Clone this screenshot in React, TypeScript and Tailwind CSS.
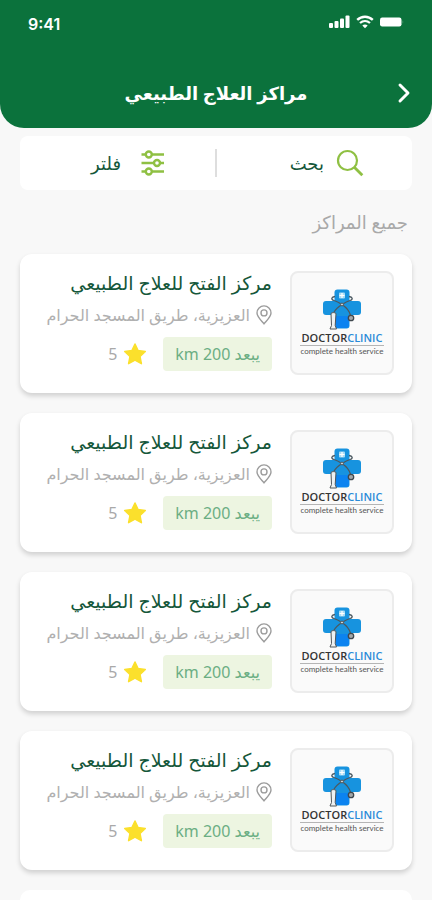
import React from 'react';
import { ChevronRight } from 'lucide-react';

const centers = [1, 2, 3, 4].map(id => ({
  id,
  name: 'مركز الفتح للعلاج الطبيعي',
  address: 'العزيزية، طريق المسجد الحرام',
  distance: 'يبعد 200 km',
  rating: 5,
}));

function SignalIcon() {
  return (
    <svg width="21" height="14" viewBox="0 0 21 14" fill="currentColor" aria-hidden="true">
      <rect x="0" y="8" width="4" height="5" rx="1" />
      <rect x="5.500" y="6" width="4" height="7" rx="1" />
      <rect x="11" y="3.500" width="4" height="9.500" rx="1" />
      <rect x="16.500" y="0.500" width="4" height="12.500" rx="1" />
    </svg>
  );
}

function WifiIcon() {
  return (
    <svg width="18" height="14" viewBox="0 0 18 14" fill="none" stroke="currentColor" aria-hidden="true">
      <path d="M1.200 4.900C5.700.600 12.300.600 16.800 4.900" strokeWidth="2.400" />
      <path d="M4 8C7 5.300 11 5.300 14 8" strokeWidth="2.200" />
      <path d="M9 13.300 6.300 10.500c1.500-1.300 3.900-1.300 5.400 0Z" fill="currentColor" stroke="none" />
    </svg>
  );
}

function BatteryIcon() {
  return (
    <svg width="24" height="10" viewBox="0 0 24 10" fill="currentColor" aria-hidden="true">
      <rect x="0" y="0.500" width="21.500" height="9" rx="2.200" />
      <path d="M22.500 3.500v3c1-.4 1-2.600 0-3Z" opacity="0.3" />
    </svg>
  );
}

function SearchIcon() {
  return (
    <svg width="28" height="28" viewBox="0 0 28 28" fill="none" stroke="currentColor" aria-hidden="true">
      <circle cx="11.500" cy="11.500" r="9.500" strokeWidth="2.200" />
      <path d="m18.300 18.300 8 8" strokeWidth="2.800" />
    </svg>
  );
}

function FilterIcon() {
  return (
    <svg width="24" height="28" viewBox="0 0 24 28" fill="none" stroke="currentColor" strokeWidth="2.400" aria-hidden="true">
      <path d="M0.500 5.500h4M11 5.500h12M0.500 14h12M19 14h4M0.500 22.500h4M11 22.500h12" />
      <circle cx="7.800" cy="5.500" r="3" />
      <circle cx="16" cy="14" r="3" />
      <circle cx="7.800" cy="22.500" r="3" />
    </svg>
  );
}

function PinIcon() {
  return (
    <svg width="16" height="20" viewBox="0 0 16 20" fill="none" stroke="#9c9c9c" strokeWidth="1.400" aria-hidden="true" className="shrink-0">
      <path d="M8 18.800C4.500 14.600 1 11.500 1 7.900a7 7 0 0 1 14 0c0 3.600-3.500 6.700-7 10.900Z" />
      <circle cx="8" cy="7.900" r="3" />
    </svg>
  );
}

function StarIcon() {
  return (
    <svg width="24" height="24" viewBox="0 0 24 24" fill="#fbe02c" stroke="#fbe02c" strokeWidth="1.500" strokeLinejoin="round" aria-hidden="true">
      <path d="m12 2 3.100 6.600 7.200.9-5.300 5 1.400 7.200L12 18.200l-6.400 3.500L7 14.500l-5.300-5 7.200-.9Z" />
    </svg>
  );
}

function ClinicLogo() {
  return (
    <div dir="ltr" className="flex h-26 w-26 shrink-0 flex-col items-center rounded-lg border-2 border-[#ececec] bg-[#fafafa] pt-4 font-['Open_Sans',sans-serif]">
      <svg width="40" height="42" viewBox="0 0 40 42" fill="none" aria-hidden="true">
        <rect x="12.500" y="0.500" width="15" height="39" rx="3" fill="#1793df" />
        <rect x="1" y="12" width="38" height="14" rx="3" fill="#1793df" />
        <path d="M13 27h14v9a3 3 0 0 1-3 3h-8a3 3 0 0 1-3-3Z" fill="#0b83f0" />
        <rect x="17" y="3.500" width="6" height="6" rx="1" fill="#a9dcf5" />
        <path d="M20 4v5M17.500 6.500h5" stroke="#fff" strokeWidth="1.200" />
        {/* stethoscope */}
        <path d="M13 7.500c-3.500.500-4.500 3-1 4 3 .8 5 2 8 4 4.500 3 7.500 6.500 8.500 11" stroke="#4b5961" strokeWidth="1.300" />
        <path d="M27 7.500c3.500.500 4.500 3 1 4-3 .8-5 2-8 4-4 2.500-6.500 4.500-8.500 8.500" stroke="#4b5961" strokeWidth="1.300" />
        <circle cx="20" cy="15.500" r="1.400" fill="#d9dee0" stroke="#4b5961" />
        <circle cx="29" cy="29" r="2.700" fill="#a2a6a8" stroke="#3f474d" strokeWidth="1.300" />
        <path d="M9 24.500c1-1.200 4-1.200 5 0l-.8 12 1.300 3.500H8l1.500-3.500Z" fill="#eef1f2" stroke="#50575b" />
      </svg>
      <div className="text-[11px] font-semibold leading-[14px] text-[#333]">
        DOCTOR<span className="text-[#2a8bd8]">CLINIC</span>
      </div>
      <div className="border-t border-[#b5b5b5] font-['Lato',sans-serif] text-[8px] leading-[10px] text-[#555]">complete health service</div>
    </div>
  );
}

export default function App() {
  return (
    <div dir="rtl" lang="ar" className="flex min-h-screen flex-col bg-[#f8f8f8] font-['Noto_Sans','DejaVu_Sans',sans-serif]">
      <header className="rounded-b-3xl bg-[#0b723c] text-white">
        {/* Status bar */}
        <div dir="ltr" className="flex h-12 items-center justify-between px-7 font-['Inter',sans-serif]">
          <span className="text-base font-semibold">9:41</span>
          <div className="flex items-center gap-1.5 pb-1">
            <SignalIcon />
            <WifiIcon />
            <BatteryIcon />
          </div>
        </div>
        <div className="grid h-20 grid-cols-[32px_1fr_32px] items-center px-3 pt-2.5">
          <button type="button" aria-label="رجوع" className="flex justify-center">
            <ChevronRight className="h-8 w-8" strokeWidth={2.2} />
          </button>
          <h1 className="text-center text-lg font-bold">مراكز العلاج الطبيعي</h1>
        </div>
      </header>

      {/* Search and filter */}
      <div className="mx-5 mt-2 grid h-[54px] grid-cols-[1fr_2px_1fr] items-center rounded-lg bg-white text-lg text-[#14573a]">
        <button type="button" className="flex items-center gap-3 pr-12">
          <span className="text-[#8fc043]"><SearchIcon /></span>
          بحث
        </button>
        <div className="h-7 bg-[#dedede]" />
        <button type="button" className="flex items-center gap-5 pr-[50px]">
          <span className="text-[#8fc043]"><FilterIcon /></span>
          فلتر
        </button>
      </div>

      <h2 className="mt-4 px-6 text-lg leading-8 text-[#a9a9a9]">جميع المراكز</h2>

      <main className="flex flex-1 flex-col gap-5 px-5 pt-4">
        {centers.map(center => (
          <article key={center.id} className="flex gap-[18px] rounded-xl bg-white px-[18px] pt-[17px] pb-[18px] shadow-[0_3px_5px_rgba(0,0,0,0.16)]">
            <ClinicLogo />
            <div className="flex min-w-0 flex-1 flex-col">
              <h3 className="h-7 whitespace-nowrap text-[19px] leading-6 text-[#14573a]">{center.name}</h3>
              <div className="flex h-8 items-center gap-1.5 whitespace-nowrap text-base text-[#b0b0b0]">
                <PinIcon />
                <span>{center.address}</span>
              </div>
              <div className="mt-1.5 flex items-center gap-4">
                <span className="flex h-[34px] items-center rounded bg-[#edf5e1] px-3 text-base text-[#6bae83]">{center.distance}</span>
                <span className="flex items-center gap-1.5 text-base text-[#a9a9a9]">
                  <StarIcon />
                  {center.rating}
                </span>
              </div>
            </div>
          </article>
        ))}

        {/* Next card, still loading */}
        <div className="min-h-2 flex-1 rounded-t-xl bg-white" />
      </main>
    </div>
  );
}
